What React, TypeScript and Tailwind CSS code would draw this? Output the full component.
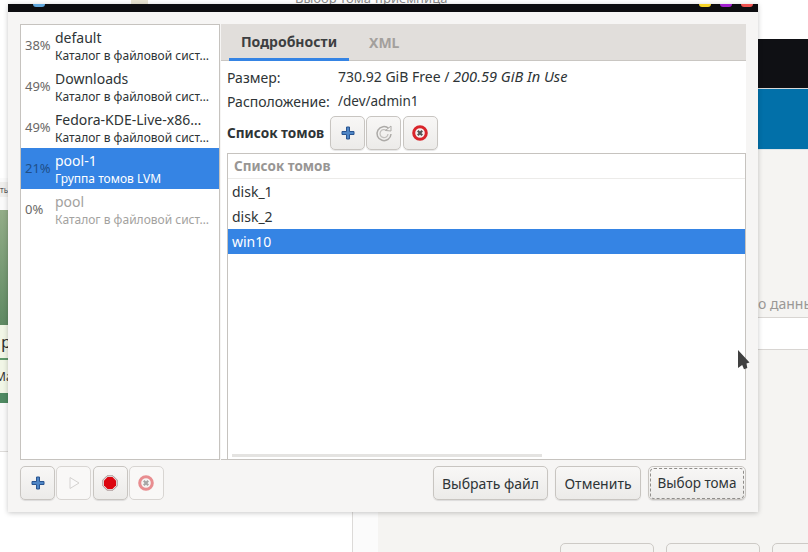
const font = "font-['Noto_Sans','Liberation_Sans',sans-serif]";

const pools = [
  { pct: '38%', name: 'default', sub: 'Каталог в файловой сист…' },
  { pct: '49%', name: 'Downloads', sub: 'Каталог в файловой сист…' },
  { pct: '49%', name: 'Fedora-KDE-Live-x86…', sub: 'Каталог в файловой сист…' },
  { pct: '21%', name: 'pool-1', sub: 'Группа томов LVM', selected: true },
  { pct: '0%', name: 'pool', sub: 'Каталог в файловой сист…', inactive: true },
];

function PlusIcon() {
  return (
    <svg width="16" height="16" viewBox="0 0 16 16">
      <path
        d="M6.500 2h3v4.500H14v3H9.500V14h-3V9.500H2v-3h4.500z"
        fill="#4f86c6"
        stroke="#2a5590"
        strokeWidth="1"
        strokeLinejoin="round"
      />
    </svg>
  );
}

function PlayIcon() {
  return (
    <svg width="16" height="16" viewBox="0 0 16 16">
      <path d="M4 2.500v11L13 8z" fill="#fbfafa" stroke="#d4d2d0" strokeWidth="1" strokeLinejoin="round" />
    </svg>
  );
}

function StopIcon() {
  return (
    <svg width="16" height="16" viewBox="0 0 16 16">
      <path d="M5 .8h6L15.200 5v6L11 15.200H5L.8 11V5z" fill="#f3e4e4" stroke="#a89696" strokeWidth="1" />
      <path d="M5.500 2h5L14 5.500v5L10.500 14h-5L2 10.500v-5z" fill="#dc0610" />
    </svg>
  );
}

function CancelIcon({ faded }: { faded?: boolean }) {
  return (
    <svg width="18" height="18" viewBox="0 0 18 18" className={faded ? 'opacity-50' : ''}>
      <circle cx="9" cy="9" r="6.300" fill="#f4f2f1" stroke="#d9252b" strokeWidth="3" />
      <path d="M6.800 6.800l4.400 4.400M11.200 6.800l-4.400 4.400" stroke="#555" strokeWidth="2.200" />
    </svg>
  );
}

function ReloadIcon() {
  return (
    <svg width="20" height="20" viewBox="0 0 20 20" fill="none">
      <path d="M14.800 5.500A7 7 0 1 0 17 11" stroke="#acaaa7" strokeWidth="1.500" />
      <path d="M12.500 7.500A4 4 0 1 0 14 11" stroke="#c2c0bd" strokeWidth="1.300" />
      <path d="M11.500 7.500L17 3v5z" fill="#f4f3f1" stroke="#acaaa7" strokeWidth="1" />
    </svg>
  );
}

function IconButton({ children, disabled }: { children: React.ReactNode; disabled?: boolean }) {
  return (
    <button
      className={`flex h-[34px] w-[35px] items-center justify-center rounded-[5px] border ${
        disabled
          ? 'border-[#d8d5d2] bg-[#f9f8f7]'
          : 'border-[#c8c5c1] bg-gradient-to-b from-[#f8f7f6] to-[#ecebe9] shadow-[0_1px_1px_rgba(0,0,0,0.1)]'
      }`}
    >
      {children}
    </button>
  );
}

function TextButton({ label, width, focus }: { label: string; width: string; focus?: boolean }) {
  return (
    <button
      className={`flex h-[34px] items-center justify-center rounded-[5px] border border-[#c8c5c1] bg-gradient-to-b from-[#f8f7f6] to-[#ecebe9] text-[#2e3436] shadow-[0_1px_1px_rgba(0,0,0,0.1)] ${width}`}
    >
      <span
        className={`flex h-[31px] w-[calc(100%-2px)] items-center justify-center rounded-[4px] ${
          focus ? 'border border-dashed border-[#8f8d8a] text-[13.500px]' : 'text-[14px]'
        }`}
      >
        {label}
      </span>
    </button>
  );
}

function PoolList() {
  return (
    <div className="h-full w-[200px] shrink-0 border border-[#c6c3bf] bg-white">
      {pools.map((p) => (
        <div
          key={p.name}
          className={`flex h-[41px] items-center ${p.selected ? 'bg-[#3584e4]' : ''}`}
        >
          <div className={`w-[34px] shrink-0 pl-1 text-[13px] ${p.selected ? 'text-[#1f4f88]' : 'text-[#6a6866]'}`}>
            {p.pct}
          </div>
          <div className="min-w-0 whitespace-nowrap">
            <div
              className={`text-[14px] leading-[19px] ${
                p.selected ? 'text-white' : p.inactive ? 'text-[#a3a2a0]' : 'text-[#2e3436]'
              }`}
            >
              {p.name}
            </div>
            <div
              className={`text-[12px] leading-[17px] ${
                p.selected ? 'text-white' : p.inactive ? 'text-[#a3a2a0]' : 'text-[#2e3436]'
              }`}
            >
              {p.sub}
            </div>
          </div>
        </div>
      ))}
    </div>
  );
}

function Details() {
  return (
    <div className="ml-px flex h-full w-[525px] flex-col bg-white">
      <div className="flex h-[37px] shrink-0 border-b border-[#c9c6c2] bg-[#e1dedb] pl-2">
        <div className="flex h-[37px] w-[120px] items-center justify-center border-b-[3px] border-[#3584e4] text-[14px] font-bold text-[#3d3f41]">
          Подробности
        </div>
        <div className="ml-5 flex items-center text-[14px] font-bold text-[#a3a09d]">XML</div>
      </div>
      <div className="flex min-h-0 flex-1 flex-col pl-1.5 pt-[4px] text-[14px] text-[#2e3436]">
        <div className="flex h-[24px] items-center">
          <span className="w-[111px]">Размер:</span>
          <span className="whitespace-pre">
            730.92 GiB Free / <i className="text-[14.600px]">200.59 GiB In Use</i>
          </span>
        </div>
        <div className="flex h-[24px] items-center">
          <span className="w-[111px]">Расположение:</span>
          <span className="text-[13.500px]">/dev/admin1</span>
        </div>
        <div className="mt-[3px] flex items-center">
          <span className="w-[103px] text-[13.600px] font-bold">Список томов</span>
          <div className="flex gap-[1.300px]">
            <IconButton>
              <PlusIcon />
            </IconButton>
            <IconButton>
              <ReloadIcon />
            </IconButton>
            <IconButton>
              <CancelIcon />
            </IconButton>
          </div>
        </div>
        <div className="mt-[3px] flex min-h-0 flex-1 flex-col border border-b-0 border-[#c6c3bf]">
          <div className="flex h-[25px] shrink-0 items-center border-b border-[#ecebe9] pl-1.5 text-[13.500px] font-bold text-[#989694]">
            Список томов
          </div>
          <div className="flex h-[25px] shrink-0 items-center pl-1">disk_1</div>
          <div className="flex h-[25px] shrink-0 items-center pl-1">disk_2</div>
          <div className="flex h-[25px] shrink-0 items-center bg-[#3584e4] pl-1 text-white">win10</div>
          <div className="flex flex-1 items-end pb-[2px] pl-1">
            <div className="h-[3px] w-[310px] bg-[#e4e3e1]" />
          </div>
        </div>
      </div>
      <div className="h-px bg-[#c6c3bf]" />
    </div>
  );
}

function Dialog() {
  return (
    <div className="absolute left-[8px] top-[4px] flex h-[508px] w-[750px] flex-col bg-[#f6f5f4] shadow-[0_1px_5px_rgba(0,0,0,0.22)]">
      <div className="relative h-[8px] shrink-0 bg-[#0d0d10]">
        <div className="absolute left-[25px] top-0 h-[3px] w-[12px] rounded-b-full bg-[#62a8dc]" />
        <div className="absolute left-[691px] top-0 h-[3px] w-[12px] rounded-b-full bg-[#f5d327]" />
        <div className="absolute left-[712px] top-0 h-[3px] w-[12px] rounded-b-full bg-[#a31fd1]" />
        <div className="absolute left-[733px] top-0 h-[3px] w-[12px] rounded-b-full bg-[#ef5350]" />
      </div>
      <div className="flex min-h-0 flex-1 flex-col px-3 pb-3 pt-3">
        <div className="flex min-h-0 flex-1">
          <PoolList />
          <Details />
        </div>
        <div className="mt-[6px] flex shrink-0 items-center">
          <div className="flex gap-[1.300px]">
            <IconButton>
              <PlusIcon />
            </IconButton>
            <IconButton disabled>
              <PlayIcon />
            </IconButton>
            <IconButton>
              <StopIcon />
            </IconButton>
            <IconButton disabled>
              <CancelIcon faded />
            </IconButton>
          </div>
          <div className="ml-auto flex gap-[7px]">
            <TextButton label="Выбрать файл" width="w-[115px]" />
            <TextButton label="Отменить" width="w-[86px]" />
            <TextButton label="Выбор тома" width="w-[98px]" focus />
          </div>
        </div>
      </div>
    </div>
  );
}

export default function App() {
  return (
    <div className={`relative h-[552px] w-[808px] overflow-hidden bg-white ${font}`}>
      {/* window behind, left side */}
      <div className="absolute left-0 top-[178px] flex h-[274px] w-[8px] flex-col overflow-hidden border-b border-[#dddbd9] bg-[#fafafa] text-[8px] text-[#555]">
        <div className="mt-[4px] h-[15px] bg-[#efeeec] leading-[15px] whitespace-nowrap">ть</div>
        <div className="h-[13px]" />
        <div className="h-[115px] bg-gradient-to-b from-[#93ad88] to-[#5f8a63]" />
        <div className="h-[33px] bg-[#f1f6e6] pl-px text-[17px] leading-[33px] text-[#333]">р</div>
        <div className="h-[2px] bg-[#5f9a6a]" />
        <div className="-ml-[5px] h-[33px] bg-[#f1f6e6] pl-[5px] text-[12px] leading-[33px] whitespace-nowrap text-[#333]">
          <span className="-ml-[5px]">Ма</span>
        </div>
        <div className="h-[10px] bg-[#4f8a62]" />
      </div>

      {/* title text peeking above the dialog */}
      <div className="absolute left-[295px] top-[-11px] text-[13px] leading-[18px] text-[#8b8b8b]">
        Выбор тома-приемница
      </div>
      <div className="absolute left-[131px] top-0 h-[4px] w-[17px] bg-[#e9e4d2]" />

      {/* window behind, right side */}
      <div className="absolute left-[352px] top-[39px] h-[513px] w-[26px] border-l border-[#dcdad8] bg-[#fbfbfb]" />
      <div className="absolute left-[378px] top-[39px] flex h-[513px] w-[430px] flex-col bg-[#f5f4f2]">
        <div className="h-[50px] shrink-0 border-b border-[#d9d9d9] bg-[#0f1014]" />
        <div className="h-[61px] shrink-0 border-b border-[#dfe5e8] bg-[#0270a9]" />
        <div className="h-[167px] shrink-0" />
        <div className="h-[33px] shrink-0 border-y border-[#d8d5d2] bg-white" />
      </div>
      <div className="absolute left-[758px] top-[294px] text-[14px] leading-[19px] whitespace-nowrap text-[#9a9896]">
        о данны
      </div>
      <div className="absolute left-[560px] top-[543px] h-[20px] w-[94px] rounded-[5px] border border-[#cdcac6] bg-[#f5f4f2]" />
      <div className="absolute left-[666px] top-[543px] h-[20px] w-[94px] rounded-[5px] border border-[#cdcac6] bg-[#f5f4f2]" />
      <div className="absolute left-[772px] top-[543px] h-[20px] w-[94px] rounded-[5px] border border-[#cdcac6] bg-[#f5f4f2]" />

      <Dialog />

      {/* mouse pointer */}
      <svg className="absolute left-[737px] top-[349px]" width="14" height="22" viewBox="0 0 14 22">
        <path d="M1 1l11.500 12.500-3 1 .8 4.500-3.300 1.200-1.800-4.200L1 19z" fill="#404040" />
      </svg>
    </div>
  );
}
